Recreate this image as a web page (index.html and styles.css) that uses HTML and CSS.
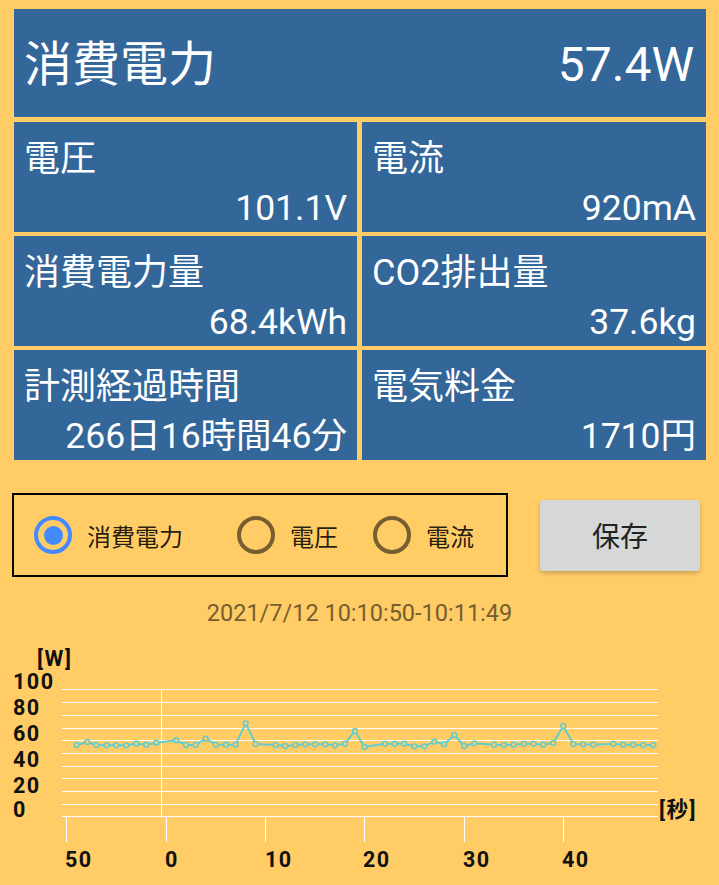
FILE: index.html
```html
<!DOCTYPE html>
<html lang="ja">
<head>
  <meta charset="UTF-8">
  <title>電力モニター</title>
  <meta name="viewport" content="width=device-width, initial-scale=1.0">
  <link rel="stylesheet" href="styles.css">
</head>
<body>

  <div class="panel">
    <div class="main">
      <span>消費電力</span>
      <span>57.4W</span>
    </div>

    <div class="tiles">
      <div class="tile">
        <div class="label">電圧</div>
        <div class="value">101.1V</div>
      </div>
      <div class="tile">
        <div class="label">電流</div>
        <div class="value">920mA</div>
      </div>
      <div class="tile">
        <div class="label">消費電力量</div>
        <div class="value">68.4kWh</div>
      </div>
      <div class="tile">
        <div class="label">CO2排出量</div>
        <div class="value">37.6kg</div>
      </div>
      <div class="tile">
        <div class="label">計測経過時間</div>
        <div class="value">266日16時間46分</div>
      </div>
      <div class="tile">
        <div class="label">電気料金</div>
        <div class="value">1710円</div>
      </div>
    </div>
  </div>

  <div class="controls">
    <div class="radios">
      <label class="radio first">
        <span class="circle on"><span class="dot"></span></span>
        <span class="radio-text">消費電力</span>
      </label>
      <label class="radio second">
        <span class="circle"></span>
        <span class="radio-text">電圧</span>
      </label>
      <label class="radio third">
        <span class="circle"></span>
        <span class="radio-text">電流</span>
      </label>
    </div>
    <button class="save">保存</button>
  </div>

  <div class="date">2021/7/12 10:10:50-10:11:49</div>

  <svg class="chart" width="719" height="245" viewBox="0 0 719 245">
    <g class="grid-lines">
      <line x1="62" y1="48.5" x2="658" y2="48.5"/>
      <line x1="62" y1="61.5" x2="658" y2="61.5"/>
      <line x1="62" y1="74.5" x2="658" y2="74.5"/>
      <line x1="62" y1="87.5" x2="658" y2="87.5"/>
      <line x1="62" y1="99.5" x2="658" y2="99.5"/>
      <line x1="62" y1="112.5" x2="658" y2="112.5"/>
      <line x1="62" y1="125.5" x2="658" y2="125.5"/>
      <line x1="62" y1="137.5" x2="658" y2="137.5"/>
      <line x1="62" y1="150.5" x2="658" y2="150.5"/>
      <line x1="62" y1="163.5" x2="658" y2="163.5"/>
      <line x1="62" y1="175.5" x2="658" y2="175.5"/>
      <line x1="161.5" y1="48" x2="161.5" y2="175"/>
      <!-- ticks -->
      <line x1="66.5" y1="176" x2="66.5" y2="201"/>
      <line x1="166.5" y1="176" x2="166.5" y2="201"/>
      <line x1="265.5" y1="176" x2="265.5" y2="201"/>
      <line x1="364.5" y1="176" x2="364.5" y2="201"/>
      <line x1="464.5" y1="176" x2="464.5" y2="201"/>
      <line x1="563.5" y1="176" x2="563.5" y2="201"/>
    </g>

    <g class="axis-text">
      <text x="37" y="25">[W]</text>
      <text x="13" y="48">100</text>
      <text x="13" y="74">80</text>
      <text x="13" y="100">60</text>
      <text x="13" y="126">40</text>
      <text x="13" y="152">20</text>
      <text x="13" y="176">0</text>
      <text x="65" y="226">50</text>
      <text x="165" y="226">0</text>
      <text x="265" y="226">10</text>
      <text x="363" y="226">20</text>
      <text x="463" y="226">30</text>
      <text x="562" y="226">40</text>
      <text x="659" y="176">[秒]</text>
    </g>

    <polyline class="series" id="series" points=""/>
    <g class="markers" id="markers"></g>
  </svg>

  <script>
    const pts = [
      [76.7,104],[87.3,101],[96.3,104],[106.7,104.3],[116.3,104.3],[126.3,104.3],
      [136.3,102.7],[146.3,103.7],[156.3,101.7],[176.3,99.3],[186,104],[195.7,104],
      [205.7,97.7],[215.7,103.7],[226,103.7],[235.7,103.7],[245.7,82.3],[255.7,103],
      [275.7,104],[285.3,105],[295.3,104],[305.3,103.3],[315.3,103.3],[325.3,103.3],
      [335,104.3],[345,102.7],[355,90],[364.3,106],[385,102.7],[394.7,102.7],
      [404.3,102.7],[414.3,105.3],[424.3,105.3],[434.3,100.7],[444.3,103.3],[454.3,94],
      [464.3,105],[474.3,102.3],[494,103.7],[504,104],[513.7,103.7],[523.7,102.7],
      [533.7,102.7],[543.3,103.7],[553.3,102],[563.3,85],[573.3,103],[583.3,103.3],
      [593.3,103.7],[613.3,102.7],[623.3,103.7],[633.3,103.7],[643.3,104],[653.3,104]
    ];

    document.getElementById('series').setAttribute('points', pts.map(p => p.join(',')).join(' '));

    const markers = document.getElementById('markers');
    pts.forEach(p => {
      const c = document.createElementNS('http://www.w3.org/2000/svg', 'circle');
      c.setAttribute('cx', p[0]);
      c.setAttribute('cy', p[1]);
      c.setAttribute('r', 2.4);
      markers.appendChild(c);
    });
  </script>

</body>
</html>
```

FILE: styles.css
```css
body {
  margin: 0;
  background: #ffcc66;
  width: 719px;
  height: 885px;
  overflow: hidden;
  font-family: Roboto, "Noto Sans CJK JP", sans-serif;
}

.panel {
  padding: 9px 13px 0 14px;
}

.main {
  height: 108px;
  box-sizing: border-box;
  background: #336699;
  color: white;
  display: flex;
  justify-content: space-between;
  padding: 32px 12px 0 10px;
  font-size: 48px;
  line-height: 48px;
  margin-bottom: 5px;
}

.tiles {
  display: grid;
  grid-template-columns: 343px 344px;
  grid-auto-rows: 110px;
  column-gap: 5px;
  row-gap: 4px;
}

.tile {
  background: #336699;
  color: white;
  padding: 0 10px;
  display: flex;
  flex-direction: column;
  justify-content: space-between;
}

.label {
  margin-top: 17px;
  font-size: 36px;
  line-height: 40px;
}

.value {
  text-align: right;
  font-size: 35.5px;
  line-height: 35px;
  margin-bottom: 6px;
}

.controls {
  display: flex;
  align-items: center;
  padding: 0 12px;
  margin-top: 33px;
}

.radios {
  width: 496px;
  height: 84px;
  box-sizing: border-box;
  border: 2px solid #000;
  display: flex;
  align-items: center;
}

.radio {
  display: flex;
  align-items: center;
}

.radio.first { margin-left: 20px; }
.radio.second { margin-left: 54px; }
.radio.third { margin-left: 35px; }

.circle {
  width: 38px;
  height: 38px;
  box-sizing: border-box;
  border: 4px solid #755e2f;
  border-radius: 50%;
  display: flex;
  align-items: center;
  justify-content: center;
}

.circle.on {
  border-color: #448aff;
}

.dot {
  width: 19px;
  height: 19px;
  border-radius: 50%;
  background: #448aff;
}

.radio-text {
  margin-left: 15px;
  font-size: 24px;
  color: rgba(0,0,0,0.87);
}

.save {
  margin-left: 32px;
  width: 160px;
  height: 71px;
  border: none;
  border-radius: 3px;
  background: #d6d7d7;
  box-shadow: 0 2px 4px rgba(0,0,0,0.22);
  font-family: Roboto, "Noto Sans CJK JP", sans-serif;
  font-size: 28px;
  color: #222;
  padding: 0;
}

.date {
  margin-top: 22px;
  text-align: center;
  font-size: 23.5px;
  line-height: 28px;
  color: #755e2f;
}

.chart {
  display: block;
  margin-top: 14px;
}

.grid-lines line {
  stroke: #fff;
  stroke-width: 1;
}

.axis-text text {
  font-family: Roboto, "Noto Sans CJK JP", sans-serif;
  font-weight: bold;
  font-size: 21.5px;
  letter-spacing: 1.5px;
  fill: #111;
}

.series {
  fill: none;
  stroke: #62cdcd;
  stroke-width: 2;
  stroke-linejoin: round;
}

.markers circle {
  fill: #ffcc66;
  stroke: #62cdcd;
  stroke-width: 1.5;
}
```
